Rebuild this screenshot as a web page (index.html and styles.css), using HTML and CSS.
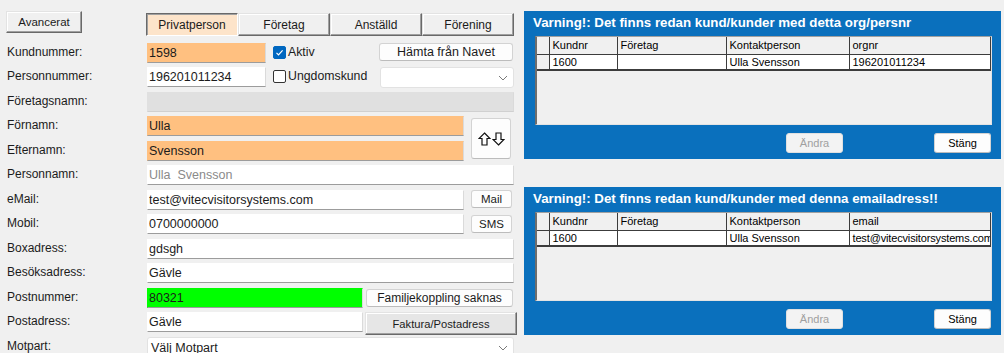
FILE: index.html
```html
<!DOCTYPE html>
<html lang="sv">
<head>
    <meta charset="UTF-8">
    <title>Kund</title>
    <link rel="stylesheet" href="styles.css">
</head>
<body>
    <div class="window">
        <div class="form">
            <div class="toolbar">
                <button class="btn-classic btn-advanced">Avancerat</button>
                <div class="tabs">
                    <button class="tab active">Privatperson</button>
                    <button class="tab">Företag</button>
                    <button class="tab">Anställd</button>
                    <button class="tab">Förening</button>
                </div>
            </div>

            <div class="row">
                <label class="label">Kundnummer:</label>
                <input class="field orange short" value="1598" readonly>
                <span class="check checked">
                    <svg width="11" height="11" viewBox="0 0 11 11"><polyline points="2.5,5.8 4.5,7.8 8.6,3.4" fill="none" stroke="#fff" stroke-width="1.2"/></svg>
                </span>
                <span class="check-label">Aktiv</span>
                <button class="btn btn-navet">Hämta från Navet</button>
            </div>

            <div class="row tall">
                <label class="label">Personnummer:</label>
                <input class="field short" value="196201011234" readonly>
                <span class="check"></span>
                <span class="check-label">Ungdomskund</span>
                <div class="select select-small">
                    <span></span>
                    <svg width="10" height="6" viewBox="0 0 10 6"><polyline points="1,1 5,5 9,1" fill="none" stroke="#7a7a7a" stroke-width="1"/></svg>
                </div>
            </div>

            <div class="row">
                <label class="label">Företagsnamn:</label>
                <input class="field disabled full" value="" readonly>
            </div>

            <div class="name-block">
                <div class="name-rows">
                    <div class="row tall">
                        <label class="label">Förnamn:</label>
                        <input class="field orange medium" value="Ulla" readonly>
                    </div>
                    <div class="row">
                        <label class="label">Efternamn:</label>
                        <input class="field orange medium" value="Svensson" readonly>
                    </div>
                </div>
                <button class="btn btn-swap">
                    <svg width="13" height="14" viewBox="0 0 13 14"><polygon points="6.5,1 12,6.5 9,6.5 9,13 4,13 4,6.5 1,6.5" fill="none" stroke="#111" stroke-width="1.2" stroke-linejoin="miter"/></svg>
                    <svg width="13" height="14" viewBox="0 0 13 14"><polygon points="6.5,13 12,7.5 9,7.5 9,1 4,1 4,7.5 1,7.5" fill="none" stroke="#111" stroke-width="1.2" stroke-linejoin="miter"/></svg>
                </button>
            </div>

            <div class="row tall">
                <label class="label">Personnamn:</label>
                <input class="field muted full" value="Ulla  Svensson" readonly>
            </div>

            <div class="row">
                <label class="label">eMail:</label>
                <input class="field medium" value="test@vitecvisitorsystems.com" readonly>
                <button class="btn btn-small">Mail</button>
            </div>

            <div class="row tall">
                <label class="label">Mobil:</label>
                <input class="field medium" value="0700000000" readonly>
                <button class="btn btn-small btn-low">SMS</button>
            </div>

            <div class="row">
                <label class="label">Boxadress:</label>
                <input class="field full" value="gdsgh" readonly>
            </div>

            <div class="row tall">
                <label class="label">Besöksadress:</label>
                <input class="field full" value="Gävle" readonly>
            </div>

            <div class="row">
                <label class="label">Postnummer:</label>
                <input class="field green half" value="80321" readonly>
                <button class="btn btn-family">Familjekoppling saknas</button>
            </div>

            <div class="row tall">
                <label class="label">Postadress:</label>
                <input class="field half" value="Gävle" readonly>
                <button class="btn-classic btn-invoice">Faktura/Postadress</button>
            </div>

            <div class="row">
                <label class="label">Motpart:</label>
                <div class="select select-wide">
                    <span>Välj Motpart</span>
                    <svg width="10" height="6" viewBox="0 0 10 6"><polyline points="1,1 5,5 9,1" fill="none" stroke="#7a7a7a" stroke-width="1"/></svg>
                </div>
            </div>
        </div>

        <div class="warnings">
            <section class="warning">
                <h2 class="warning-title">Varning!: Det finns redan kund/kunder med detta org/persnr</h2>
                <div class="grid">
                    <table>
                        <tr class="grid-head">
                            <th class="rowhead"></th><th>Kundnr</th><th>Företag</th><th>Kontaktperson</th><th>orgnr</th>
                        </tr>
                        <tr class="grid-row">
                            <td class="rowhead"></td><td>1600</td><td></td><td>Ulla Svensson</td><td>196201011234</td>
                        </tr>
                    </table>
                </div>
                <div class="warning-actions">
                    <button class="btn btn-panel" disabled>Ändra</button>
                    <button class="btn btn-panel">Stäng</button>
                </div>
            </section>

            <section class="warning">
                <h2 class="warning-title">Varning!: Det finns redan kund/kunder med denna emailadress!!</h2>
                <div class="grid">
                    <table>
                        <tr class="grid-head">
                            <th class="rowhead"></th><th>Kundnr</th><th>Företag</th><th>Kontaktperson</th><th>email</th>
                        </tr>
                        <tr class="grid-row">
                            <td class="rowhead"></td><td>1600</td><td></td><td>Ulla Svensson</td><td class="clip">test@vitecvisitorsystems.com</td>
                        </tr>
                    </table>
                </div>
                <div class="warning-actions">
                    <button class="btn btn-panel" disabled>Ändra</button>
                    <button class="btn btn-panel">Stäng</button>
                </div>
            </section>
        </div>
    </div>
</body>
</html>
```

FILE: styles.css
```css
:root {
    --bg-color: #f0f0f0;
    --text-color: #1b1b1b;
    --field-orange: #ffc080;
    --field-green: #00ff00;
    --field-disabled: #e0e0e0;
    --panel-blue: #0a70bd;
    --grid-line: #3c3c3c;
    --font-family: 'Liberation Sans', Arial, sans-serif;
}

body {
    margin: 0;
    background: var(--bg-color);
    color: var(--text-color);
    font-family: var(--font-family);
    font-size: 12px;
    width: 1004px;
    height: 353px;
    overflow: hidden;
}

button {
    font-family: inherit;
    color: var(--text-color);
    margin: 0;
    padding: 0;
    cursor: pointer;
}

.window {
    display: flex;
    align-items: flex-start;
}

/* Formulär */
.form {
    width: 520px;
    flex-shrink: 0;
    padding-top: 11px;
}

.toolbar {
    display: flex;
    align-items: flex-start;
    height: 32px;
}

.btn-classic {
    background: #f0f0f0;
    border: 1px solid;
    border-color: #e3e3e3 #696969 #696969 #e3e3e3;
    box-shadow: inset -1px -1px 0 #a0a0a0, inset 1px 1px 0 #fff;
    font-size: 12px;
}

.btn-advanced {
    margin-left: 6px;
    width: 76px;
    height: 22px;
    font-size: 11.5px;
}

.tabs {
    display: flex;
    margin-left: 64px;
    margin-top: 2px;
}

.tab {
    width: 92px;
    height: 23px;
    background: #f0f0f0;
    border: 1px solid;
    border-color: #e3e3e3 #696969 #696969 #e3e3e3;
    box-shadow: inset -1px -1px 0 #a0a0a0, inset 1px 1px 0 #fff;
    font-size: 12px;
}

.tab.active {
    background: #fde4ca;
    border-color: #696969 #fff #fff #696969;
    box-shadow: inset 1px 1px 0 #a0a0a0;
}

.row {
    display: flex;
    align-items: flex-start;
    height: 24px;
}

.row.tall {
    height: 25px;
}

.label {
    width: 147px;
    flex-shrink: 0;
    box-sizing: border-box;
    padding-left: 7px;
    line-height: 18px;
    font-size: 12px;
    color: #1b1b1b;
}

.field {
    box-sizing: border-box;
    height: 20px;
    margin: 0;
    padding: 0 0 0 1px;
    border: 1px solid transparent;
    border-bottom-color: #9c9c9c;
    border-right-color: #dadada;
    background: #fff;
    font-family: inherit;
    font-size: 12.5px;
    color: #1b1b1b;
    outline: none;
}

.field.orange {
    background: var(--field-orange);
}

.field.green {
    background: var(--field-green);
}

.field.disabled {
    background: var(--field-disabled);
    border-bottom-color: #d0d0d0;
}

.field.muted {
    color: #8a8a8a;
}

.field.short {
    width: 119px;
}

.field.medium {
    width: 317px;
}

.field.half {
    width: 216px;
}

.field.full {
    width: 367px;
}

.check {
    box-sizing: border-box;
    width: 13px;
    height: 13px;
    margin: 3px 2px 0 7px;
    border: 1px solid #333;
    border-radius: 2px;
    background: #fff;
    display: flex;
    align-items: center;
    justify-content: center;
}

.check.checked {
    background: #0067c0;
    border-color: #0067c0;
}

.check-label {
    line-height: 19px;
    font-size: 12.3px;
    color: #1b1b1b;
}

.btn {
    box-sizing: border-box;
    background: #fdfdfd;
    border: 1px solid #d3d3d3;
    border-bottom-color: #bcbcbc;
    border-radius: 3px;
    font-size: 12px;
}

.btn-navet {
    margin-left: auto;
    margin-right: 7px;
    width: 134px;
    height: 18px;
    font-size: 12.5px;
}

.select {
    box-sizing: border-box;
    display: flex;
    align-items: center;
    justify-content: space-between;
    height: 21px;
    padding: 0 5px 0 3px;
    background: #fff;
    border: 1px solid #e2e2e2;
    border-radius: 3px;
    font-size: 12.5px;
}

.select-small {
    margin-left: auto;
    margin-right: 6px;
    width: 134px;
}

.select-wide {
    width: 367px;
}

.name-block {
    display: flex;
    align-items: flex-start;
}

.name-rows {
    width: 464px;
}

.btn-swap {
    margin: 2px 0 0 7px;
    width: 40px;
    height: 41px;
    display: flex;
    align-items: center;
    justify-content: center;
    gap: 1px;
}

.btn-small {
    margin-left: 7px;
    width: 41px;
    height: 18px;
    font-size: 11.5px;
}

.btn-low {
    margin-top: 1px;
}

.btn-family {
    margin: 1px 0 0 3px;
    width: 147px;
    height: 18px;
}

.btn-invoice {
    margin-left: 2px;
    width: 152px;
    height: 23px;
    background: #e6e6e6;
    font-size: 11.2px;
}

/* Varningar */
.warnings {
    width: 477px;
    margin-left: 4px;
    padding-top: 11px;
    display: flex;
    flex-direction: column;
    gap: 28px;
}

.warning {
    background: var(--panel-blue);
    padding: 0 9px 6px 11px;
}

.warning-title {
    margin: 0 0 4px -2px;
    padding-top: 2px;
    line-height: 19px;
    font-size: 13.3px;
    font-weight: bold;
    color: #fff;
    white-space: nowrap;
}

.grid {
    box-sizing: border-box;
    height: 89px;
    background: #f0f0f0;
    border-top: 1px solid #a0a0a0;
    border-left: 2px solid #6d6d6d;
    border-right: 1px solid #e3e3e3;
    border-bottom: 1px solid #e3e3e3;
    overflow: hidden;
}

.grid table {
    width: 454px;
    table-layout: fixed;
    border-collapse: collapse;
    font-size: 11px;
}

.grid th,
.grid td {
    box-sizing: border-box;
    padding: 0 0 0 3px;
    text-align: left;
    font-weight: normal;
    white-space: nowrap;
    overflow: hidden;
    border-right: 1px solid var(--grid-line);
    color: #000;
}

.grid th {
    height: 17px;
    background: #f0f0f0;
    border-bottom: 1px solid var(--grid-line);
}

.grid td {
    height: 16px;
    background: #fff;
    border-bottom: 2px solid var(--grid-line);
}

.grid td.clip {
    letter-spacing: -0.15px;
}

.grid .rowhead {
    width: 12px;
    background: #f0f0f0;
}

.grid th:nth-child(2) { width: 68px; }
.grid th:nth-child(3) { width: 109px; }
.grid th:nth-child(4) { width: 123px; }

.warning-actions {
    display: flex;
    justify-content: flex-end;
    gap: 91px;
    margin-top: 8px;
    margin-right: 1px;
}

.btn-panel {
    width: 57px;
    height: 20px;
    font-size: 11px;
    color: #000;
}

.btn-panel:disabled {
    background: #f3f3f3;
    border-color: #e0e0e0;
    color: #a0a0a0;
    cursor: default;
}
```
